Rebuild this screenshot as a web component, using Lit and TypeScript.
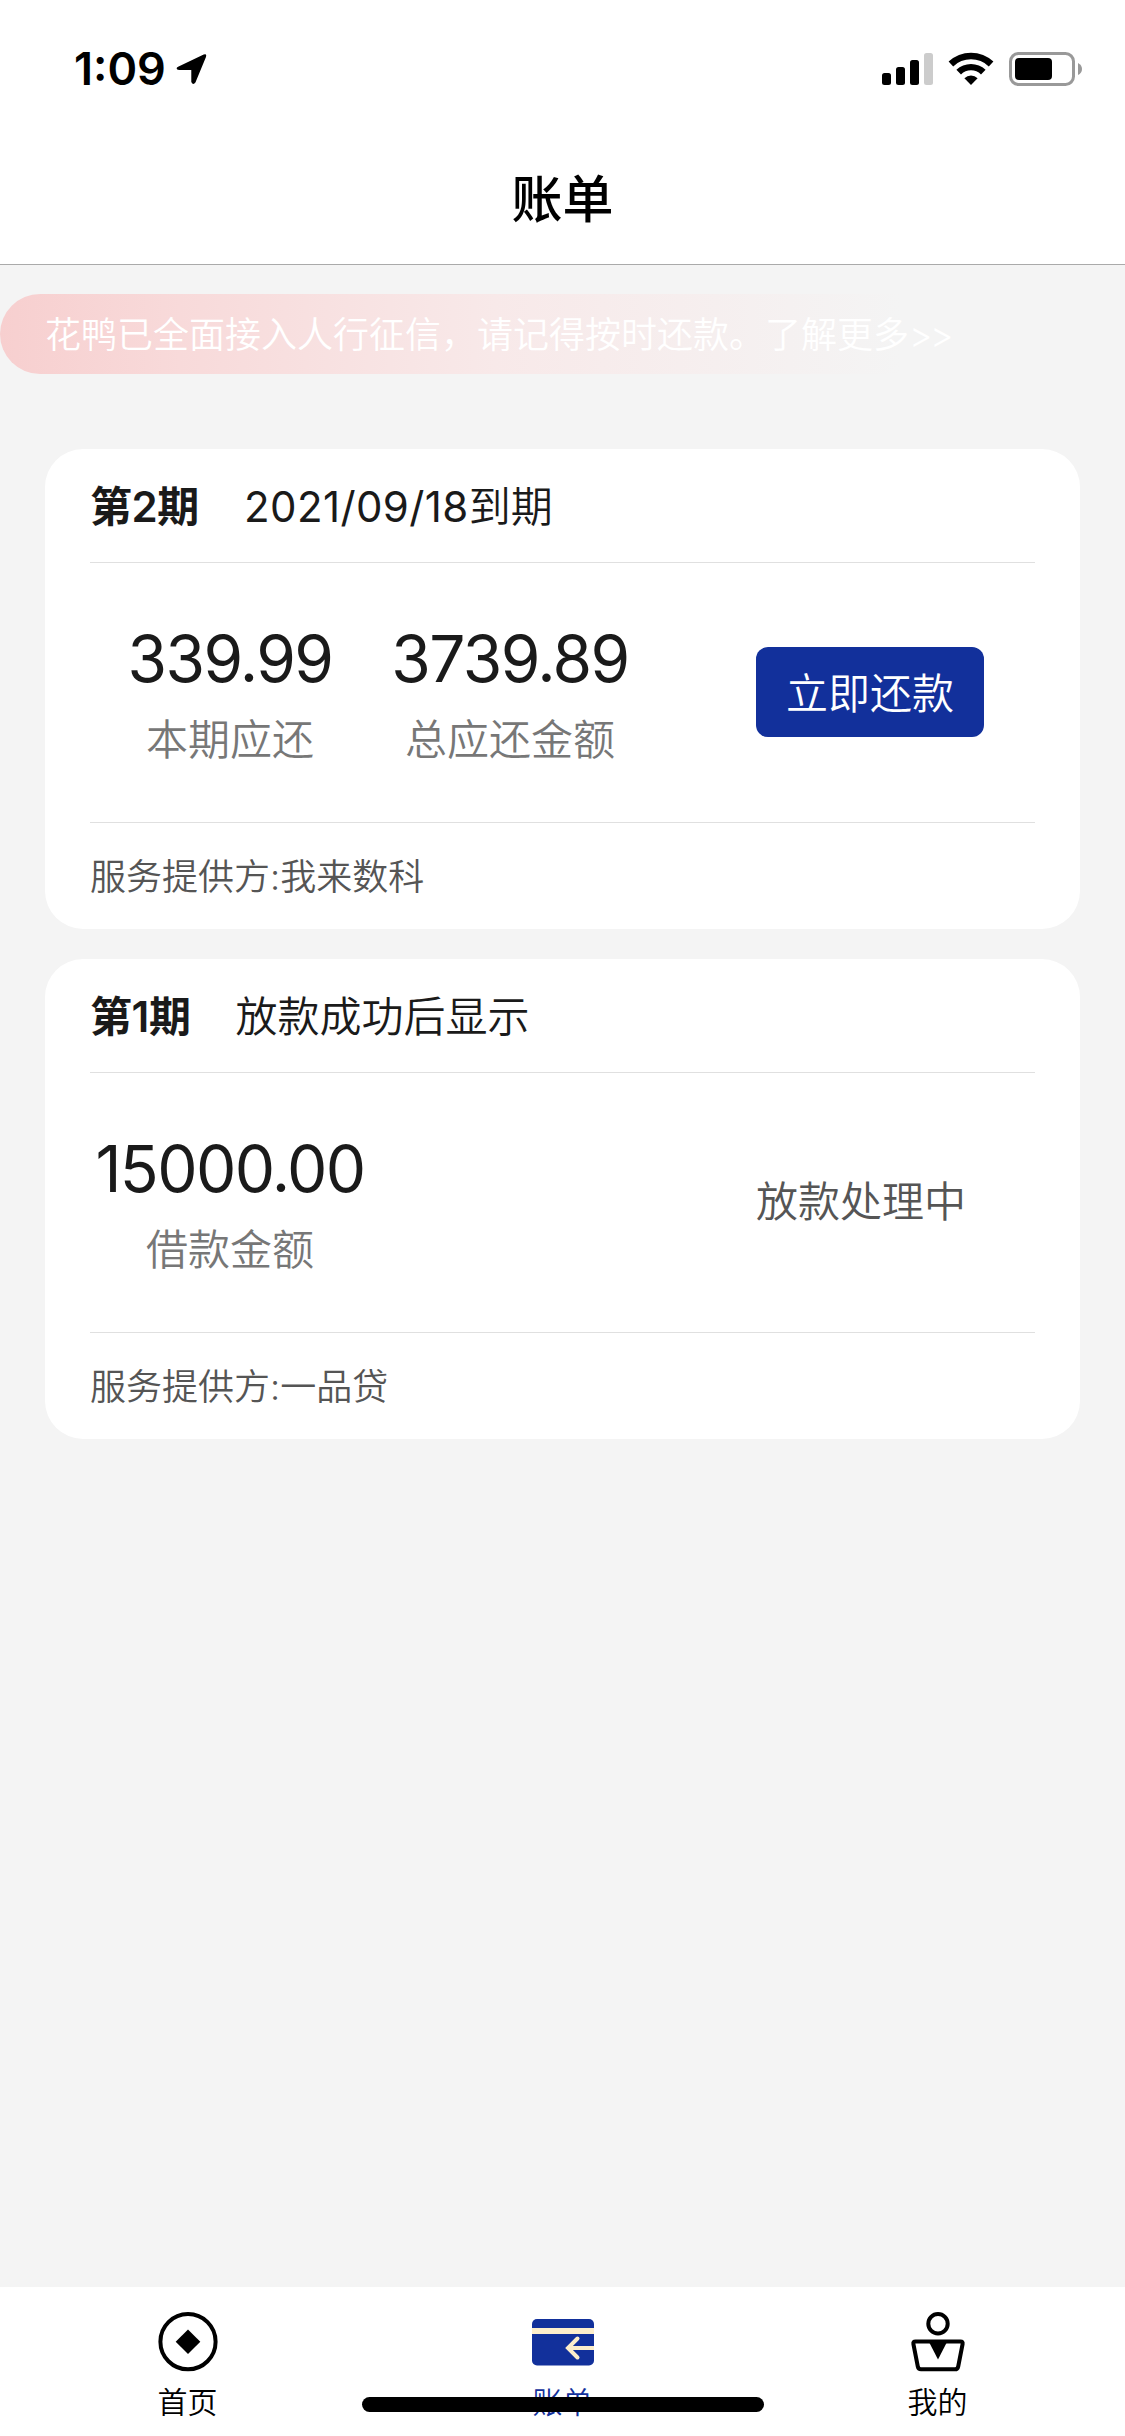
import { LitElement, html, svg, css, nothing } from "lit";
import { customElement, property } from "lit/decorators.js";

interface Amount {
  value: string;
  label: string;
}

interface Bill {
  term: string;
  date?: string;
  due: string;
  amounts: Amount[];
  action?: string;
  status?: string;
  provider: string;
}

const bills: Bill[] = [
  {
    term: "第2期",
    date: "2021/09/18",
    due: "到期",
    amounts: [
      { value: "339.99", label: "本期应还" },
      { value: "3739.89", label: "总应还金额" },
    ],
    action: "立即还款",
    provider: "我来数科",
  },
  {
    term: "第1期",
    due: "放款成功后显示",
    amounts: [{ value: "15000.00", label: "借款金额" }],
    status: "放款处理中",
    provider: "一品贷",
  },
];

@customElement("status-bar")
class StatusBar extends LitElement {
  static styles = css`
    :host {
      display: flex;
      align-items: center;
      justify-content: space-between;
      height: 138px;
      padding: 0 43px 0 74px;
      box-sizing: border-box;
    }
    .left {
      display: flex;
      align-items: center;
      gap: 10px;
    }
    .time {
      font-size: 45px;
      font-weight: 600;
      line-height: 54px;
    }
    svg {
      display: block;
    }
  `;

  render() {
    return html`
      <div class="left">
        <span class="time">1:09</span>
        <svg width="31" height="31" viewBox="0 0 30 30">
          <path
            d="M2 12.400 26.800.6Q30-.4 29 2.800L18.800 27.600Q16.600 30.600 14.800 27.200V15.600H3Q-1.200 14.400 2 12.400Z"
          />
        </svg>
      </div>
      <svg width="200" height="34" viewBox="882 52 200 34">
        <rect x="882" y="73" width="9" height="12" rx="2.500" />
        <rect x="896" y="67" width="9" height="18" rx="2.500" />
        <rect x="910" y="60" width="9" height="25" rx="2.500" />
        <rect x="924" y="53" width="9" height="32" rx="2.500" fill="#ccc" />
        <path
          d="M948.600 61.600A32.600 32.600 0 0 1 993.400 61.600L988.800 66.400A25.600 25.600 0 0 0 953.200 66.400Z"
        />
        <path
          d="M956.400 69.800A21 21 0 0 1 985.600 69.800L981 74.400A14.400 14.400 0 0 0 961 74.400Z"
        />
        <path d="M964.400 78.200A9.600 9.600 0 0 1 977.600 78.200L971 85Z" />
        <rect
          x="1010.500"
          y="53.500"
          width="63"
          height="31"
          rx="8"
          fill="none"
          stroke="#999"
          stroke-width="3"
        />
        <rect x="1015" y="58" width="37" height="22" rx="4" />
        <path d="M1078 63Q1082 65 1082 69T1078 75Z" fill="#999" />
      </svg>
    `;
  }
}

@customElement("bill-card")
class BillCard extends LitElement {
  @property({ attribute: false }) bill!: Bill;

  static styles = css`
    :host {
      display: flex;
      flex-direction: column;
      height: 480px;
      padding: 0 45px;
      box-sizing: border-box;
      border-radius: 38px;
      background: #fff;
      color: #1a1a1a;
      font-weight: 350;
    }
    .head {
      display: flex;
      align-items: center;
      gap: 45px;
      height: 114px;
      padding-bottom: 4px;
      box-sizing: border-box;
      font-size: 42px;
      border-bottom: 1px solid #e0e0e0;
    }
    .term {
      font-weight: 600;
      letter-spacing: -0.4px;
    }
    .date {
      font-weight: 400;
      letter-spacing: 0.4px;
    }
    .body {
      display: flex;
      align-items: center;
      height: 260px;
      padding-bottom: 1px;
      box-sizing: border-box;
      border-bottom: 1px solid #e0e0e0;
    }
    .amounts {
      display: flex;
      align-self: flex-start;
      width: 666px;
      padding-top: 51px;
    }
    .amount {
      display: flex;
      flex-direction: column;
      align-items: center;
      gap: 6px;
      width: 280px;
    }
    .value {
      font-size: 64px;
      font-weight: 400;
      line-height: 90px;
      letter-spacing: -1.6px;
    }
    .label {
      font-size: 42px;
      line-height: 60px;
      color: #777;
    }
    .pay {
      width: 228px;
      height: 90px;
      padding: 0 0 3px;
      border: 0;
      border-radius: 12px;
      background: #12309b;
      color: #fff;
      font: inherit;
      font-size: 42px;
    }
    .status {
      font-size: 42px;
      line-height: 60px;
      color: #555;
    }
    .provider {
      display: flex;
      align-items: center;
      flex: 1;
      padding-bottom: 4px;
      font-size: 36px;
      color: #555;
    }
  `;

  render() {
    const { term, date, due, amounts, action, status, provider } = this.bill;
    return html`
      <div class="head">
        <span class="term">${term}</span>
        <span>${date ? html`<span class="date">${date}</span>` : nothing}${due}</span>
      </div>
      <div class="body">
        <div class="amounts">
          ${amounts.map(
            (a) => html`
              <div class="amount">
                <span class="value">${a.value}</span>
                <span class="label">${a.label}</span>
              </div>
            `,
          )}
        </div>
        ${action ? html`<button class="pay">${action}</button>` : nothing}
        ${status ? html`<span class="status">${status}</span>` : nothing}
      </div>
      <div class="provider">服务提供方:${provider}</div>
    `;
  }
}

const homeIcon = svg`
  <circle cx="33" cy="31.700" r="27.600" fill="none" stroke="#000" stroke-width="4"/>
  <path d="M33 19.400 45.300 31.700 33 44 20.700 31.700Z"/>`;

const billIcon = svg`
  <rect x="2" y="9" width="62" height="46.500" rx="5" fill="#12309b"/>
  <path d="M2 18h62v6h-62z" fill="#fdeecb"/>
  <path d="M64 38H39" fill="none" stroke="#fdeecb" stroke-width="4"/>
  <path d="M47.500 28.500 38 38 47.500 47.500" fill="none" stroke="#fdeecb" stroke-width="4" stroke-linecap="round"/>`;

const mineIcon = svg`
  <circle cx="33" cy="13.700" r="9.700" fill="none" stroke="#000" stroke-width="4"/>
  <path d="M10.500 31.500H55.500Q58.100 31.500 57.600 34L53.200 56.500Q52.600 59.300 50 59.300H16Q13.400 59.300 12.800 56.500L8.400 34Q7.900 31.500 10.500 31.500Z" fill="none" stroke="#000" stroke-width="4"/>
  <path d="M24 32H42L33 49.500Z"/>`;

@customElement("tab-bar")
class TabBar extends LitElement {
  static styles = css`
    :host {
      position: relative;
      display: grid;
      grid-template-columns: repeat(3, 1fr);
      height: 149px;
      background: #fff;
    }
    .tab {
      display: flex;
      flex-direction: column;
      align-items: center;
      gap: 6px;
      padding-top: 23px;
      font-size: 30px;
      font-weight: 350;
      line-height: 44px;
    }
    .active {
      color: #12309b;
    }
    .icon {
      display: block;
    }
    .indicator {
      position: absolute;
      left: 50%;
      bottom: 24px;
      width: 402px;
      height: 15px;
      transform: translateX(-50%);
      border-radius: 8px;
      background: #000;
    }
  `;

  private tab(label: string, icon: unknown, active = false) {
    return html`
      <div class="tab ${active ? "active" : ""}">
        <svg class="icon" width="65" height="64" viewBox="0 0 65 64">${icon}</svg>
        <span>${label}</span>
      </div>
    `;
  }

  render() {
    return html`
      ${this.tab("首页", homeIcon)} ${this.tab("账单", billIcon, true)}
      ${this.tab("我的", mineIcon)}
      <div class="indicator"></div>
    `;
  }
}

@customElement("app-root")
class AppRoot extends LitElement {
  static styles = css`
    :host {
      display: flex;
      flex-direction: column;
      height: 2436px;
      background: #f4f4f4;
      color: #000;
      font-family: Inter, "Noto Sans CJK SC", sans-serif;
    }
    .top {
      height: 265px;
      box-sizing: border-box;
      border-bottom: 1px solid #aaa;
      background: #fff;
    }
    .title {
      margin: 0;
      padding-top: 25px;
      text-align: center;
      font-size: 51px;
      font-weight: 500;
      line-height: 74px;
    }
    .notice {
      height: 80px;
      margin-top: 29px;
      padding-left: 45px;
      border-radius: 40px 0 0 40px;
      background: linear-gradient(to right, #f7cfcf, #f8dada 16%, #f8e9e9 44%, #f4f4f4 80%);
      color: #fff;
      font-weight: 350;
      font-size: 36px;
      line-height: 83px;
    }
    .more {
      letter-spacing: -2.5px;
    }
    .bills {
      display: flex;
      flex: 1;
      flex-direction: column;
      gap: 30px;
      padding: 75px 45px 0;
    }
  `;

  render() {
    return html`
      <header class="top">
        <status-bar></status-bar>
        <h1 class="title">账单</h1>
      </header>
      <div class="notice">
        花鸭已全面接入人行征信，请记得按时还款。了解更多<span class="more">&gt;&gt;</span>
      </div>
      <main class="bills">
        ${bills.map((b) => html`<bill-card .bill=${b}></bill-card>`)}
      </main>
      <tab-bar></tab-bar>
    `;
  }
}
